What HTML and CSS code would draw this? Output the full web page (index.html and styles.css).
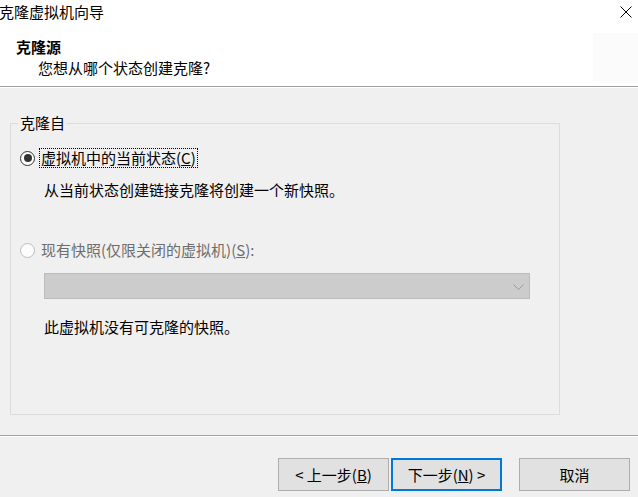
FILE: index.html
```html
<!DOCTYPE html>
<html lang="zh-CN">
<head>
<meta charset="utf-8">
<title>克隆虚拟机向导</title>
<link rel="stylesheet" href="styles.css">
</head>
<body>
<div class="dialog">
  <div class="top">
    <div class="titlebar">
      <span class="title">克隆虚拟机向导</span>
      <span class="close" aria-label="关闭">
        <svg width="12" height="12" viewBox="0 0 12 12"><path d="M0.5 0.5 L11.5 11.5 M11.5 0.5 L0.5 11.5" stroke="#000" stroke-width="1" fill="none"/></svg>
      </span>
    </div>
    <div class="header">
      <div class="header-text">
        <div class="heading">克隆源</div>
        <div class="subtitle">您想从哪个状态创建克隆?</div>
      </div>
      <div class="header-icon"></div>
    </div>
  </div>
  <div class="body">
    <fieldset class="group">
      <legend class="legend">克隆自</legend>
      <div class="group-inner">
        <div class="radio-row">
          <span class="radio checked"></span>
          <span class="radio-label focus">虚拟机中的当前状态(<u>C</u>)</span>
        </div>
        <div class="note first-note">从当前状态创建链接克隆将创建一个新快照。</div>
        <div class="radio-row disabled second-row">
          <span class="radio"></span>
          <span class="radio-label">现有快照(仅限关闭的虚拟机)(<u>S</u>):</span>
        </div>
        <div class="combo">
          <svg class="chev" width="11" height="6" viewBox="0 0 11 6"><path d="M0.5 0.5 L5.5 5.5 L10.5 0.5" stroke="#9a9a9a" stroke-width="1" fill="none"/></svg>
        </div>
        <div class="note last-note">此虚拟机没有可克隆的快照。</div>
      </div>
    </fieldset>
  </div>
  <div class="footer">
    <button class="btn">&lt; 上一步(<u>B</u>)</button>
    <button class="btn default">下一步(<u>N</u>) &gt;</button>
    <button class="btn cancel">取消</button>
  </div>
</div>
</body>
</html>
```

FILE: styles.css
```css
html, body {
  margin: 0;
  padding: 0;
}
body {
  width: 638px;
  height: 497px;
  background: #f0f0f0;
  font-family: "Noto Sans CJK SC", "Noto Sans", sans-serif;
  font-size: 15px;
  line-height: 20px;
  color: #000;
  overflow: hidden;
}
.dialog {
  display: flex;
  flex-direction: column;
  height: 497px;
}
.top {
  background: #fff;
  border-bottom: 1px solid #a0a0a0;
  box-shadow: 0 1px 0 #fff;
  height: 86px;
}
.titlebar {
  height: 24px;
  display: flex;
  align-items: center;
  justify-content: space-between;
}
.title {
  line-height: 24px;
  margin-left: -1px;
}
.close {
  display: flex;
  width: 12px;
  height: 12px;
  margin-right: 6px;
}
.header {
  display: flex;
  justify-content: space-between;
}
.header-text {
  padding-top: 13px;
}
.heading {
  font-weight: bold;
  padding-left: 16px;
}
.subtitle {
  padding-left: 38px;
  margin-top: 1px;
}
.header-icon {
  width: 45px;
  height: 49px;
  margin-top: 9px;
  background: #fbfbfb;
}
.body {
  padding: 0 0 0 10px;
  margin-top: 26px;
}
.group {
  width: 550px;
  box-sizing: border-box;
  margin: 0;
  padding: 0;
  border: 1px solid #dcdcdc;
  min-width: 0;
}
.legend {
  padding: 0 2px;
  margin-left: 7px;
  line-height: 20px;
}
.group-inner {
  padding: 15px 0 77px 0;
}
.radio-row {
  display: flex;
  align-items: center;
  height: 20px;
}
.radio {
  width: 15px;
  height: 15px;
  box-sizing: border-box;
  border-radius: 50%;
  border: 1px solid #333;
  background: #fff;
  margin-left: 9px;
  margin-right: 4px;
  display: flex;
  align-items: center;
  justify-content: center;
}
.radio.checked::after {
  content: "";
  width: 8px;
  height: 8px;
  border-radius: 50%;
  background: #333;
}
.radio-label {
  padding: 0 1px;
  height: 18px;
  line-height: 18px;
  border: 1px dotted transparent;
}
.radio-label.focus {
  border-color: #000;
}
.disabled .radio {
  border-color: #bcbcbc;
  background: #fcfcfc;
}
.disabled .radio-label {
  color: #6d6d6d;
}
.note {
  padding-left: 33px;
}
.first-note {
  margin-top: 12px;
}
.second-row {
  margin-top: 40px;
}
.combo {
  margin: 13px 0 0 33px;
  width: 486px;
  height: 26px;
  box-sizing: border-box;
  background: #cccccc;
  border: 1px solid #bcbcbc;
  display: flex;
  align-items: center;
  justify-content: flex-end;
}
.chev {
  margin-right: 5px;
  margin-top: 1px;
}
.last-note {
  margin-top: 18px;
}
.footer {
  margin-top: 20px;
  border-top: 1px solid #a0a0a0;
  box-shadow: inset 0 1px 0 #fff;
  padding: 22px 8px 0 0;
  display: flex;
  justify-content: flex-end;
  align-items: flex-start;
  flex: 1;
}
.btn {
  font: inherit;
  width: 111px;
  height: 33px;
  box-sizing: border-box;
  background: #e1e1e1;
  border: 1px solid #adadad;
  color: #000;
  padding: 0;
  line-height: 20px;
  margin: 0;
}
.btn.default {
  border: 2px solid #0078d7;
  margin-left: 2px;
}
.btn.cancel {
  margin-left: 17px;
}
```
